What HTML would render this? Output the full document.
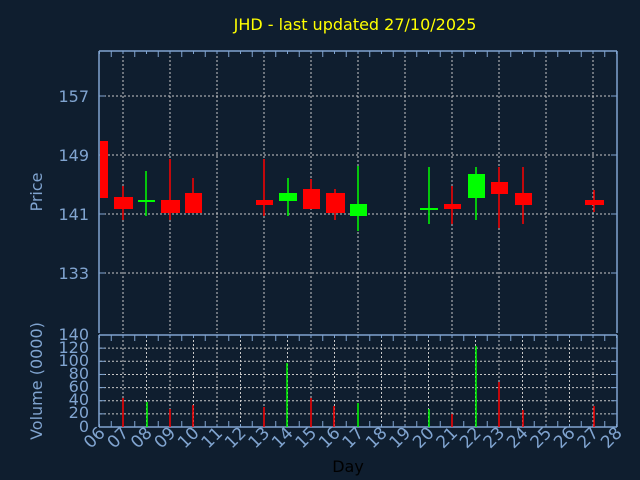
<!DOCTYPE html>
<html><head><meta charset="utf-8"><style>
html,body{margin:0;padding:0;background:#0f1e2f;}
svg{display:block;}
text{font-family:"DejaVu Sans","Liberation Sans",sans-serif;}
</style></head><body>
<svg id="s" width="640" height="480" viewBox="0 0 640 480" xmlns="http://www.w3.org/2000/svg">
<rect width="640" height="480" fill="#0f1e2f"/>
<g id="grid" stroke="#c8c8c8" stroke-width="1" stroke-dasharray="2,2" fill="none"></g>
<g id="axes" stroke="#80a4d0" stroke-width="1.5" fill="none">
<line x1="99" y1="51" x2="617" y2="51"/>
<line x1="99" y1="51" x2="99" y2="333"/>
<line x1="617" y1="51" x2="617" y2="333"/>
<line x1="99" y1="335" x2="617" y2="335"/>
<line x1="99" y1="427" x2="617" y2="427"/>
<line x1="99" y1="335" x2="99" y2="427"/>
<line x1="617" y1="335" x2="617" y2="427"/>
</g>
<g id="ticks" stroke="#80a4d0" stroke-width="1" fill="none"></g>
<g id="candles"></g>
<g id="vols"></g>
<text x="355" y="30" fill="#ffff00" font-size="16" text-anchor="middle">JHD - last updated 27/10/2025</text>
<g fill="#80a4d0" font-size="16" text-anchor="end">
<text x="89" y="102">157</text>
<text x="89" y="161">149</text>
<text x="89" y="220">141</text>
<text x="89" y="279">133</text>
<text x="89" y="340">140</text>
<text x="89" y="353">120</text>
<text x="89" y="366">100</text>
<text x="89" y="379">80</text>
<text x="89" y="392">60</text>
<text x="89" y="405">40</text>
<text x="89" y="418">20</text>
<text x="89" y="432">0</text>
</g>
<text transform="translate(42,192) rotate(-90)" fill="#80a4d0" font-size="16" text-anchor="middle">Price</text>
<text transform="translate(42,381) rotate(-90)" fill="#80a4d0" font-size="16" text-anchor="middle">Volume (0000)</text>
<text x="348" y="472" fill="#000" font-size="16" text-anchor="middle">Day</text>
<g fill="#80a4d0" font-size="17" text-anchor="end">
<text transform="translate(106,434) rotate(-45)">06</text>
<text transform="translate(129.5,434) rotate(-45)">07</text>
<text transform="translate(153,434) rotate(-45)">08</text>
<text transform="translate(176.5,434) rotate(-45)">09</text>
<text transform="translate(200,434) rotate(-45)">10</text>
<text transform="translate(223.5,434) rotate(-45)">11</text>
<text transform="translate(247,434) rotate(-45)">12</text>
<text transform="translate(270.5,434) rotate(-45)">13</text>
<text transform="translate(294,434) rotate(-45)">14</text>
<text transform="translate(317.5,434) rotate(-45)">15</text>
<text transform="translate(341,434) rotate(-45)">16</text>
<text transform="translate(364.5,434) rotate(-45)">17</text>
<text transform="translate(388,434) rotate(-45)">18</text>
<text transform="translate(411.5,434) rotate(-45)">19</text>
<text transform="translate(435,434) rotate(-45)">20</text>
<text transform="translate(458.5,434) rotate(-45)">21</text>
<text transform="translate(482,434) rotate(-45)">22</text>
<text transform="translate(505.5,434) rotate(-45)">23</text>
<text transform="translate(529,434) rotate(-45)">24</text>
<text transform="translate(552.5,434) rotate(-45)">25</text>
<text transform="translate(576,434) rotate(-45)">26</text>
<text transform="translate(599.5,434) rotate(-45)">27</text>
<text transform="translate(623,434) rotate(-45)">28</text>
</g>
</svg>
<script>
var NS="http://www.w3.org/2000/svg";
function ln(g,x1,y1,x2,y2,c,w){var e=document.createElementNS(NS,"line");e.setAttribute("x1",x1);e.setAttribute("y1",y1);e.setAttribute("x2",x2);e.setAttribute("y2",y2);if(c)e.setAttribute("stroke",c);if(w)e.setAttribute("stroke-width",w);document.getElementById(g).appendChild(e);}
function rc(g,x,y,w,h,c){var e=document.createElementNS(NS,"rect");e.setAttribute("x",x);e.setAttribute("y",y);e.setAttribute("width",w);e.setAttribute("height",h);e.setAttribute("fill",c);document.getElementById(g).appendChild(e);}
[96,155,214,273].forEach(function(y){ln("grid",100,y,616,y);});
for(var i=0;i<11;i++){var x=123+47*i;ln("grid",x,52,x,333);}
for(var v=20;v<=120;v+=20){var y=427-v*0.657;ln("grid",100,y,616,y);}
for(var i=1;i<22;i++){var x=99.5+23.5*i;ln("grid",x,336,x,426);}
for(var i=0;i<=44;i++){var x=99.5+11.75*i;var L=(i%2==1)?6:3;
 ln("ticks",x,51,x,51+L);ln("ticks",x,335,x,335+L);ln("ticks",x,427,x,427-L);}
[96,155,214,273].forEach(function(y){ln("ticks",99,y,105,y);ln("ticks",617,y,611,y);});
for(var v=0;v<=140;v+=20){var y=427-v*0.657;ln("ticks",99,y,105,y);ln("ticks",617,y,611,y);}
var R="#ff0000",G="#00ff00";
var c=[
[104,141,198,100,108,141,198,R],
[123,186,220,114,133,197,209,R],
[146,171,216,138,155,200,202,G],
[170,159,220,161,180,200,213,R],
[193,178,213,185,202,193,213,R],
[264,159,216,256,273,200,205,R],
[288,178,216,279,297,193,201,G],
[311,179,209,303,320,189,209,R],
[335,189,220,326,345,193,213,R],
[358,166,231,350,367,204,216,G],
[429,167,224,420,438,208,210,G],
[452,186,224,444,461,204,209,R],
[476,167,220,468,485,174,198,G],
[499,167,228,491,508,182,194,R],
[523,167,224,515,532,193,205,R],
[594,190,212,585,604,200,205,R]];
c.forEach(function(a){if(a[0]!=104)ln("candles",a[0],a[1],a[0],a[2],a[7],1.5);rc("candles",a[3],a[5],a[4]-a[3],a[6]-a[5],a[7]);});
var v=[[123,398,R],[147,402,G],[170,409,R],[193,405,R],[264,407,R],[287,363,G],[311,398,R],[334,406,R],[358,403,G],[429,409,G],[452,414,R],[476,346,G],[499,382,R],[523,410,R],[594,406,R]];
v.forEach(function(a){ln("vols",a[0],a[1],a[0],427,a[2],1.5);});
</script>
</body></html>
